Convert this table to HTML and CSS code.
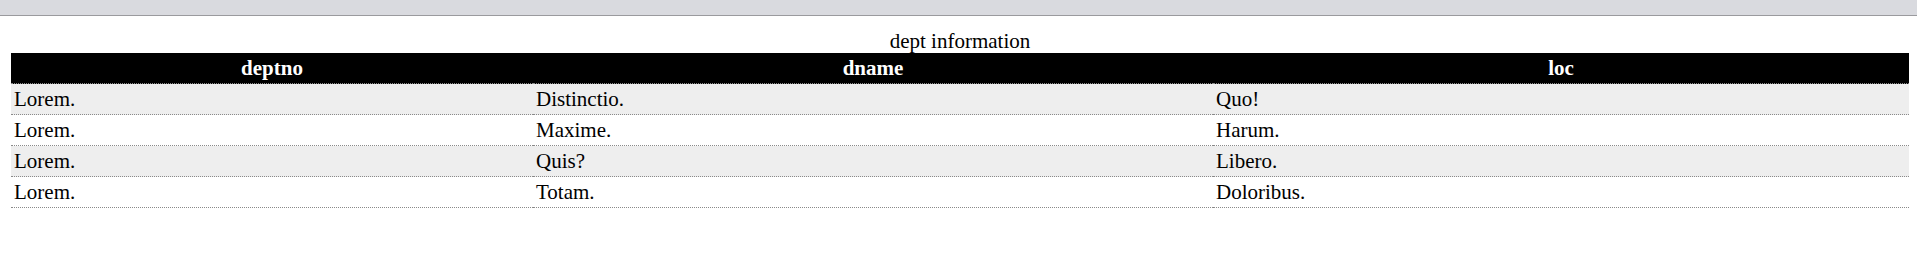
FILE: index.html
```html
<!DOCTYPE html>
<html lang="en">
<head>
<meta charset="utf-8">
<title>dept information</title>
<link rel="stylesheet" href="styles.css">
</head>
<body>
<div class="topbar"></div>
<main class="page">
<table class="dept">
<caption class="dept-caption">dept information</caption>
<colgroup>
<col class="c1"><col class="c2"><col class="c3">
</colgroup>
<thead>
<tr><th>deptno</th><th>dname</th><th>loc</th></tr>
</thead>
<tbody>
<tr class="odd"><td>Lorem.</td><td>Distinctio.</td><td>Quo!</td></tr>
<tr><td>Lorem.</td><td>Maxime.</td><td>Harum.</td></tr>
<tr class="odd"><td>Lorem.</td><td>Quis?</td><td>Libero.</td></tr>
<tr><td>Lorem.</td><td>Totam.</td><td>Doloribus.</td></tr>
</tbody>
</table>
</main>
</body>
</html>
```
FILE: styles.css
```css
html, body {
  margin: 0;
  padding: 0;
  background: #ffffff;
}
body {
  font-family: "Liberation Serif", "Times New Roman", serif;
  font-size: 21px;
  color: #000000;
}
.topbar {
  height: 15px;
  background: #d9dadf;
  border-bottom: 1px solid #9a9a9e;
}
.page {
  padding: 14px 8px 0 11px;
}
.dept {
  width: 100%;
  border-collapse: collapse;
  table-layout: fixed;
}
.dept-caption {
  line-height: 23px;
  text-align: center;
}
.c1 { width: 522px; }
.c2 { width: 680px; }
.c3 { width: auto; }
.dept th {
  background: #000000;
  color: #ffffff;
  font-weight: bold;
  text-align: center;
  line-height: 22px;
  padding: 4px 3px;
  border-bottom: 1px dotted #8a8a8a;
}
.dept td {
  text-align: left;
  line-height: 22px;
  padding: 4px 3px;
  border-bottom: 1px dotted #8a8a8a;
}
.dept tr.odd td {
  background: #eeeeee;
}
```
